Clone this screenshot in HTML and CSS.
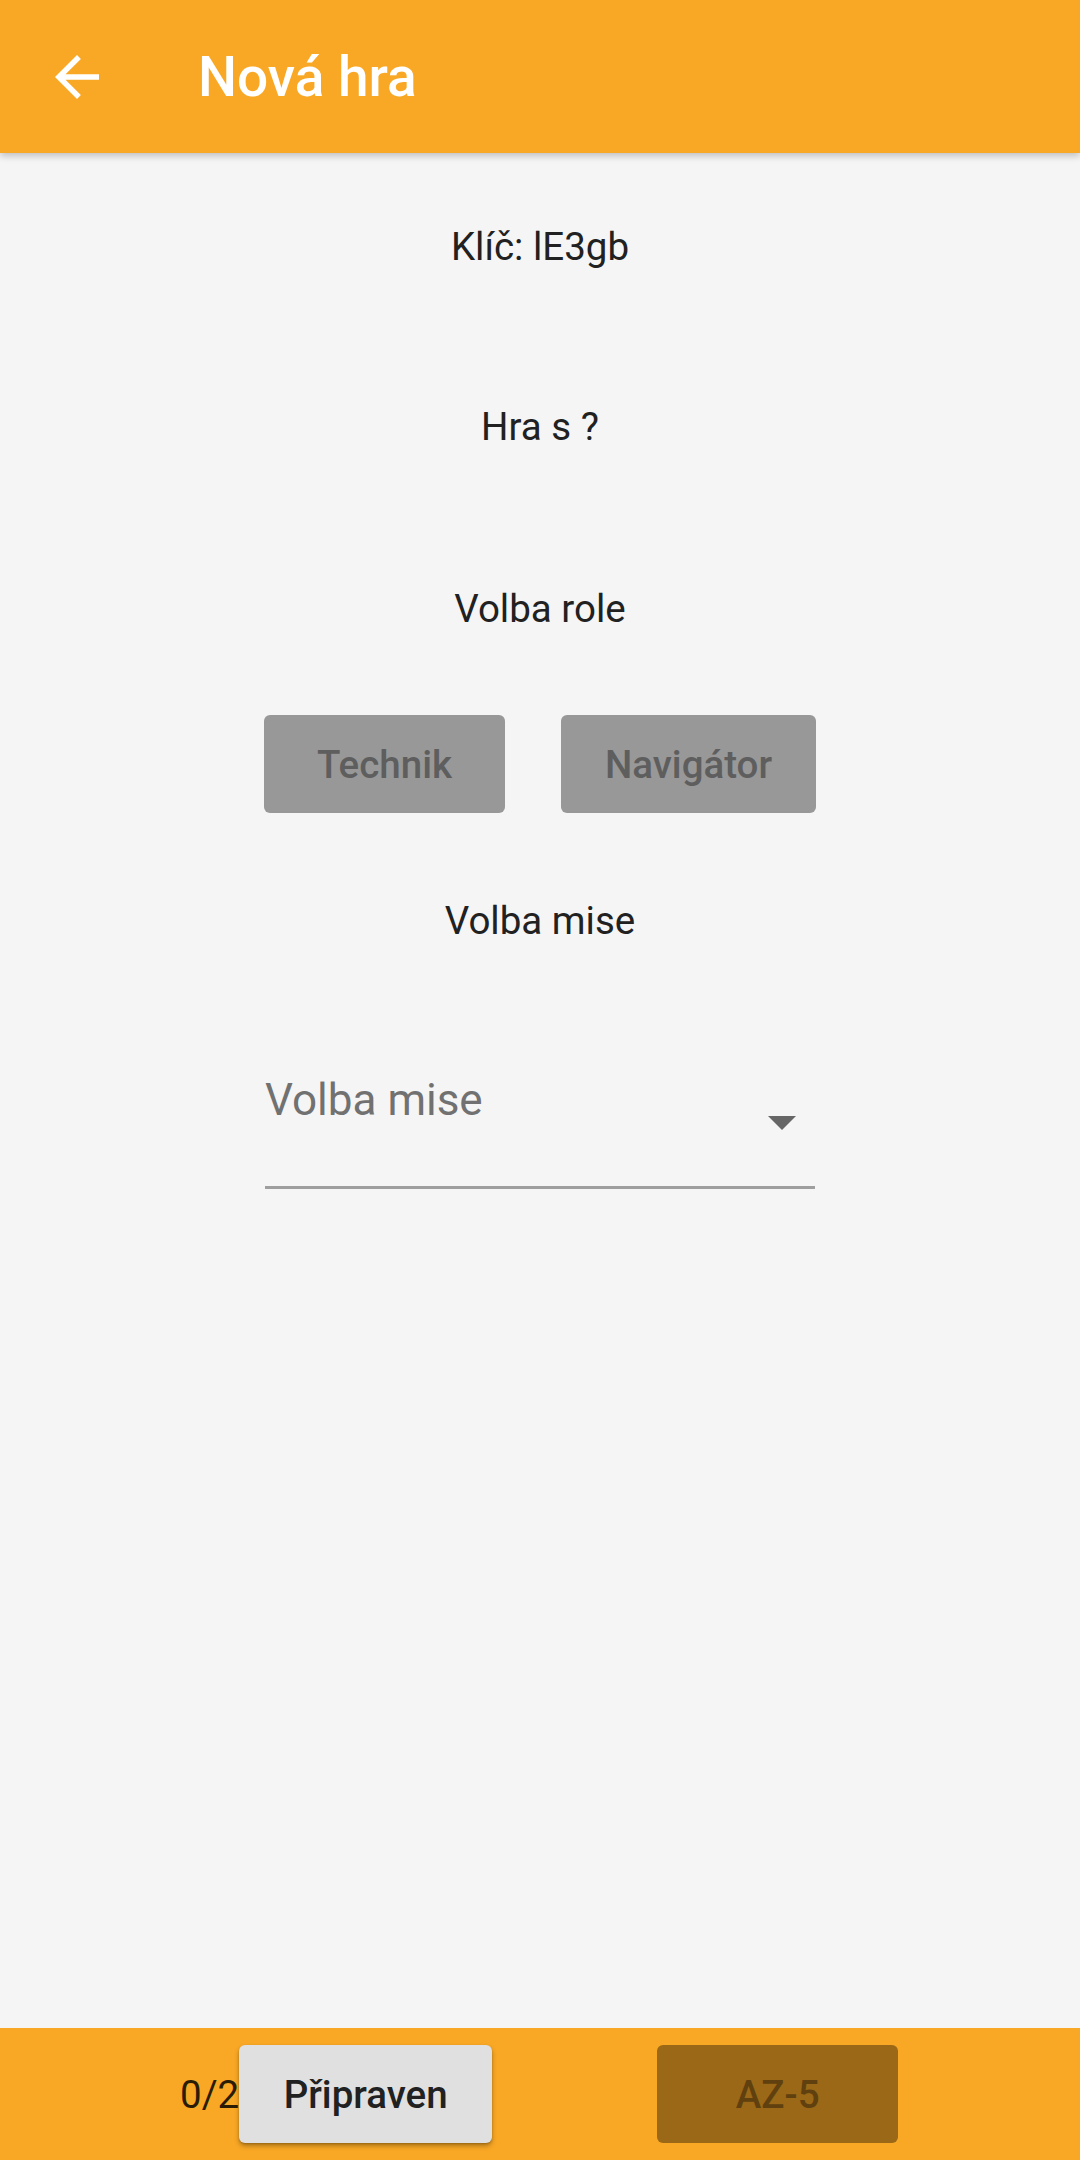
FILE: index.html
```html
<!DOCTYPE html>
<html lang="cs">
<head>
<meta charset="utf-8">
<title>Nová hra</title>
<link rel="stylesheet" href="styles.css">
</head>
<body>
<header class="appbar">
  <button class="back" aria-label="Zpět">
    <svg viewBox="0 0 24 24" width="66" height="66"><path fill="#fff" d="M20 11H7.830l5.59-5.59L12 4l-8 8 8 8 1.41-1.41L7.83 13H20v-2z"/></svg>
  </button>
  <h1 class="title">Nová hra</h1>
</header>
<main class="content">
  <p class="label label-key">Klíč: lE3gb</p>
  <p class="label label-partner">Hra s ?</p>
  <p class="label label-role">Volba role</p>
  <div class="roles">
    <button class="btn btn-disabled role-technik" disabled>Technik</button>
    <button class="btn btn-disabled role-navigator" disabled>Navigátor</button>
  </div>
  <p class="label label-mission">Volba mise</p>
  <div class="dropdown">
    <span class="hint">Volba mise</span>
    <svg class="caret" viewBox="7 10 10 5" width="28" height="14"><path fill="#666" d="M7 10l5 5 5-5z"/></svg>
  </div>
</main>
<footer class="bottombar">
  <div class="ready-group">
    <span class="count">0/2</span>
    <button class="btn btn-ready">Připraven</button>
  </div>
  <button class="btn btn-az" disabled>AZ-5</button>
</footer>
</body>
</html>
```
FILE: styles.css
```css
* { box-sizing: border-box; }
html, body { margin: 0; padding: 0; }
body {
  width: 1080px;
  height: 2160px;
  display: flex;
  flex-direction: column;
  font-family: Roboto, "Noto Sans", "Liberation Sans", sans-serif;
  background: #f5f5f5;
  color: #212121;
  overflow: hidden;
}
.appbar {
  height: 153px;
  flex: 0 0 153px;
  background: #f9a825;
  display: flex;
  align-items: center;
  padding-left: 44px;
  box-shadow: 0 3px 7px rgba(0,0,0,0.22);
  position: relative;
  z-index: 2;
}
.back {
  width: 66px;
  height: 66px;
  padding: 0;
  border: 0;
  background: none;
  display: flex;
}
.title {
  margin: 0 0 0 88px;
  font-size: 55px;
  font-weight: 500;
  color: #fff;
  line-height: 66px;
}
.content {
  flex: 1 1 auto;
  display: flex;
  flex-direction: column;
  align-items: center;
  padding-top: 71px;
}
.label {
  margin: 0;
  font-size: 38.5px;
  line-height: 45px;
  color: #212121;
}
.label-partner { margin-top: 135px; }
.label-role { margin-top: 137px; }
.roles {
  margin-top: 84px;
  display: flex;
  gap: 56px;
}
.btn {
  height: 98px;
  border: 0;
  border-radius: 6px;
  font-family: inherit;
  font-size: 38.5px;
  font-weight: 500;
  padding: 0 40px;
}
.btn-disabled {
  background: #989898;
  color: #5e5e5e;
}
.role-technik { width: 241px; }
.role-navigator { width: 255px; }
.label-mission { margin-top: 85px; }
.dropdown {
  margin-top: 131px;
  width: 550px;
  height: 115px;
  border-bottom: 3px solid #9e9e9e;
  display: flex;
  align-items: flex-start;
  justify-content: space-between;
}
.hint {
  font-size: 44px;
  line-height: 52px;
  color: #717171;
}
.caret {
  margin-top: 42px;
  margin-right: 19px;
}
.bottombar {
  flex: 0 0 132px;
  height: 132px;
  background: #f9a825;
  display: flex;
  align-items: center;
  padding-left: 180px;
  gap: 165px;
}
.ready-group {
  display: flex;
  align-items: center;
}
.count {
  font-size: 38.5px;
  color: #2a1c05;
}
.btn-ready {
  width: 253px;
  background: #e0e0e0;
  color: #212121;
  box-shadow: 0 3px 5px rgba(0,0,0,0.3), 0 1px 2px rgba(0,0,0,0.15);
}
.btn-az {
  width: 241px;
  background: #9a6817;
  color: #5f400e;
}
```
